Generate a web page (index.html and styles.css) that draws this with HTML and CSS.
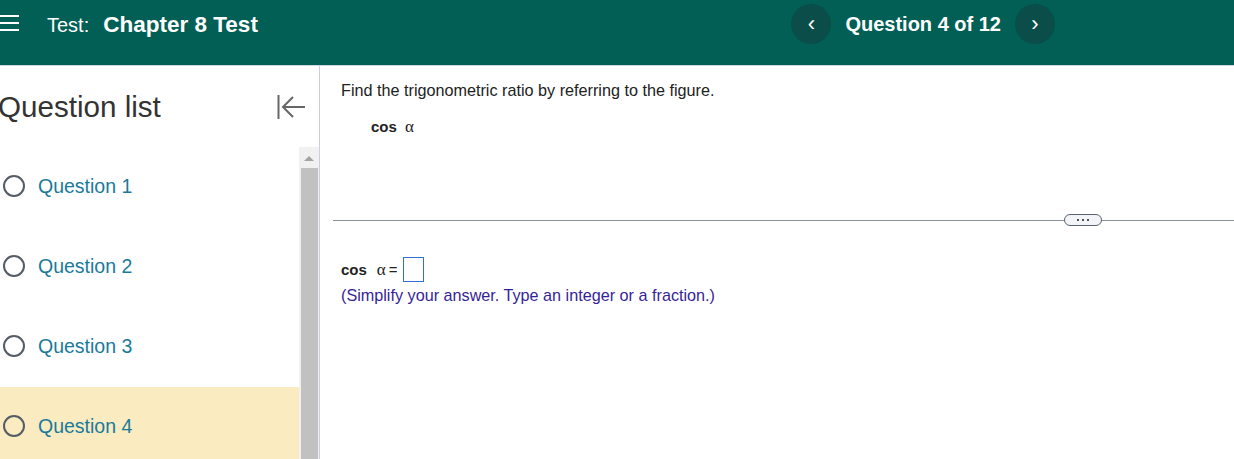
FILE: index.html
```html
<!DOCTYPE html>
<html lang="en">
<head>
    <meta charset="UTF-8">
    <meta name="viewport" content="width=device-width, initial-scale=1.0">
    <title>Chapter 8 Test</title>
    <link rel="stylesheet" href="styles.css">
</head>
<body>

    <!-- Top Bar -->
    <header class="topbar">
        <div class="menu-icon">
            <span></span><span></span><span></span>
        </div>
        <div class="test-title">
            <span class="label">Test:</span>
            <span class="name">Chapter 8 Test</span>
        </div>
        <nav class="question-nav">
            <button class="nav-btn">&#8249;</button>
            <span class="nav-text">Question 4 of 12</span>
            <button class="nav-btn">&#8250;</button>
        </nav>
    </header>

    <div class="layout">
        <!-- Question List Sidebar -->
        <aside class="sidebar">
            <div class="sidebar-head">
                <h2>Question list</h2>
                <svg class="collapse-icon" width="28" height="28" viewBox="0 0 28 28">
                    <line x1="1.5" y1="2" x2="1.5" y2="26" stroke="#666" stroke-width="2"/>
                    <line x1="6" y1="14" x2="28" y2="14" stroke="#666" stroke-width="2"/>
                    <polyline points="16,4 6,14 16,24" fill="none" stroke="#666" stroke-width="2"/>
                </svg>
            </div>
            <div class="list-wrap">
                <ul class="question-list">
                    <li><span class="radio"></span>Question 1</li>
                    <li><span class="radio"></span>Question 2</li>
                    <li><span class="radio"></span>Question 3</li>
                    <li class="current"><span class="radio"></span>Question 4</li>
                </ul>
                <div class="scrollbar">
                    <div class="scroll-arrow"></div>
                    <div class="scroll-thumb"></div>
                </div>
            </div>
        </aside>

        <!-- Question Content -->
        <main class="content">
            <p class="prompt">Find the trigonometric ratio by referring to the figure.</p>
            <p class="expr"><b>cos</b> <span class="greek">&alpha;</span></p>

            <div class="divider">
                <span class="pill"><i></i><i></i><i></i></span>
            </div>

            <p class="answer"><b>cos</b> <span class="greek">&alpha;</span> = <span class="answer-box"></span></p>
            <p class="hint">(Simplify your answer. Type an integer or a fraction.)</p>
        </main>
    </div>

</body>
</html>
```

FILE: styles.css
```css
/* General Reset */
body, html {
    margin: 0;
    padding: 0;
    font-family: "Liberation Sans", Arial, sans-serif;
    height: 100%;
    overflow: hidden;
}

/* Top Bar */
.topbar {
    height: 65px;
    background-color: #025f55;
    color: white;
    display: flex;
    align-items: flex-start;
    box-sizing: border-box;
    padding-top: 4px;
}

.menu-icon {
    width: 19px;
    margin-top: 11px;
    display: flex;
    flex-direction: column;
    gap: 5px;
}

.menu-icon span {
    display: block;
    height: 2px;
    background-color: white;
}

.test-title {
    margin-left: 28px;
    margin-top: 8px;
    display: flex;
    align-items: baseline;
}

.test-title .label {
    font-size: 20px;
}

.test-title .name {
    font-size: 22.5px;
    font-weight: bold;
    margin-left: 14px;
}

.question-nav {
    margin-left: auto;
    margin-right: 179px;
    display: flex;
    align-items: center;
    gap: 14px;
}

.nav-btn {
    width: 40px;
    height: 40px;
    border-radius: 50%;
    border: none;
    background-color: #0b4d48;
    color: white;
    font-size: 22px;
    font-family: "Liberation Sans", Arial, sans-serif;
    line-height: 40px;
    padding: 0 0 3px 0;
    cursor: pointer;
}

.nav-text {
    font-size: 20px;
    font-weight: bold;
}

/* Layout */
.layout {
    display: flex;
    height: calc(100% - 65px);
    border-top: 1px solid #cfd6e0;
    box-sizing: border-box;
}

/* Sidebar */
.sidebar {
    width: 320px;
    flex-shrink: 0;
    border-right: 1px solid #c8d0dc;
    box-sizing: border-box;
    display: flex;
    flex-direction: column;
}

.sidebar-head {
    height: 81px;
    display: flex;
    align-items: center;
    justify-content: space-between;
    padding-right: 14px;
}

.sidebar-head h2 {
    margin: 0 0 0 -2px;
    font-size: 29.6px;
    font-weight: normal;
    color: #333;
}

.list-wrap {
    flex: 1;
    display: flex;
    min-height: 0;
}

.question-list {
    list-style: none;
    margin: 0;
    padding: 0;
    flex: 1;
}

.question-list li {
    height: 80px;
    display: flex;
    align-items: center;
    font-size: 19.5px;
    color: #1b7a9b;
    padding-bottom: 2px;
    box-sizing: border-box;
}

.question-list li.current {
    background-color: #faebc0;
}

.radio {
    width: 18px;
    height: 18px;
    border: 2.5px solid #555c65;
    border-radius: 50%;
    margin-left: 3px;
    margin-right: 13px;
}

/* Fake Scrollbar */
.scrollbar {
    width: 20px;
    background-color: #f1f1f1;
    display: flex;
    flex-direction: column;
    align-items: center;
}

.scroll-arrow {
    width: 0;
    height: 0;
    border-left: 5px solid transparent;
    border-right: 5px solid transparent;
    border-bottom: 5px solid #a3a3a3;
    margin-top: 9px;
    margin-bottom: 7px;
}

.scroll-thumb {
    width: 17px;
    flex: 1;
    background-color: #c1c1c1;
}

/* Content */
.content {
    flex: 1;
    padding-top: 15px;
    font-size: 16.2px;
    color: #222;
}

.content p {
    margin: 0;
}

.prompt {
    padding-left: 21px;
}

.expr {
    padding-left: 51px;
    margin-top: 17px !important;
    font-size: 15px;
}

.greek {
    font-family: "Liberation Serif", "Times New Roman", serif;
    font-size: 17px;
    margin-left: 4px;
}

.divider {
    margin: 83px 0 0 13px;
    height: 1px;
    background-color: #8a929e;
    position: relative;
}

.pill {
    position: absolute;
    left: 731px;
    top: -6px;
    width: 36px;
    height: 10px;
    border: 1px solid #5a6470;
    border-radius: 6px;
    background-color: #f2f4f7;
    display: flex;
    justify-content: center;
    align-items: center;
    gap: 3px;
}

.pill i {
    width: 2px;
    height: 2px;
    background-color: #4a525c;
}

.answer {
    padding-left: 21px;
    margin-top: 36px !important;
    font-size: 15px;
    display: flex;
    align-items: center;
}

.answer b {
    margin-right: 5px;
}

.answer .greek {
    margin-left: 5px;
    margin-right: 3px;
}

.answer-box {
    display: inline-block;
    width: 19px;
    height: 23px;
    border: 1px solid #2f6fd6;
    margin-left: 5px;
}

.hint {
    padding-left: 21px;
    margin-top: 4px !important;
    color: #361f98;
}
```
